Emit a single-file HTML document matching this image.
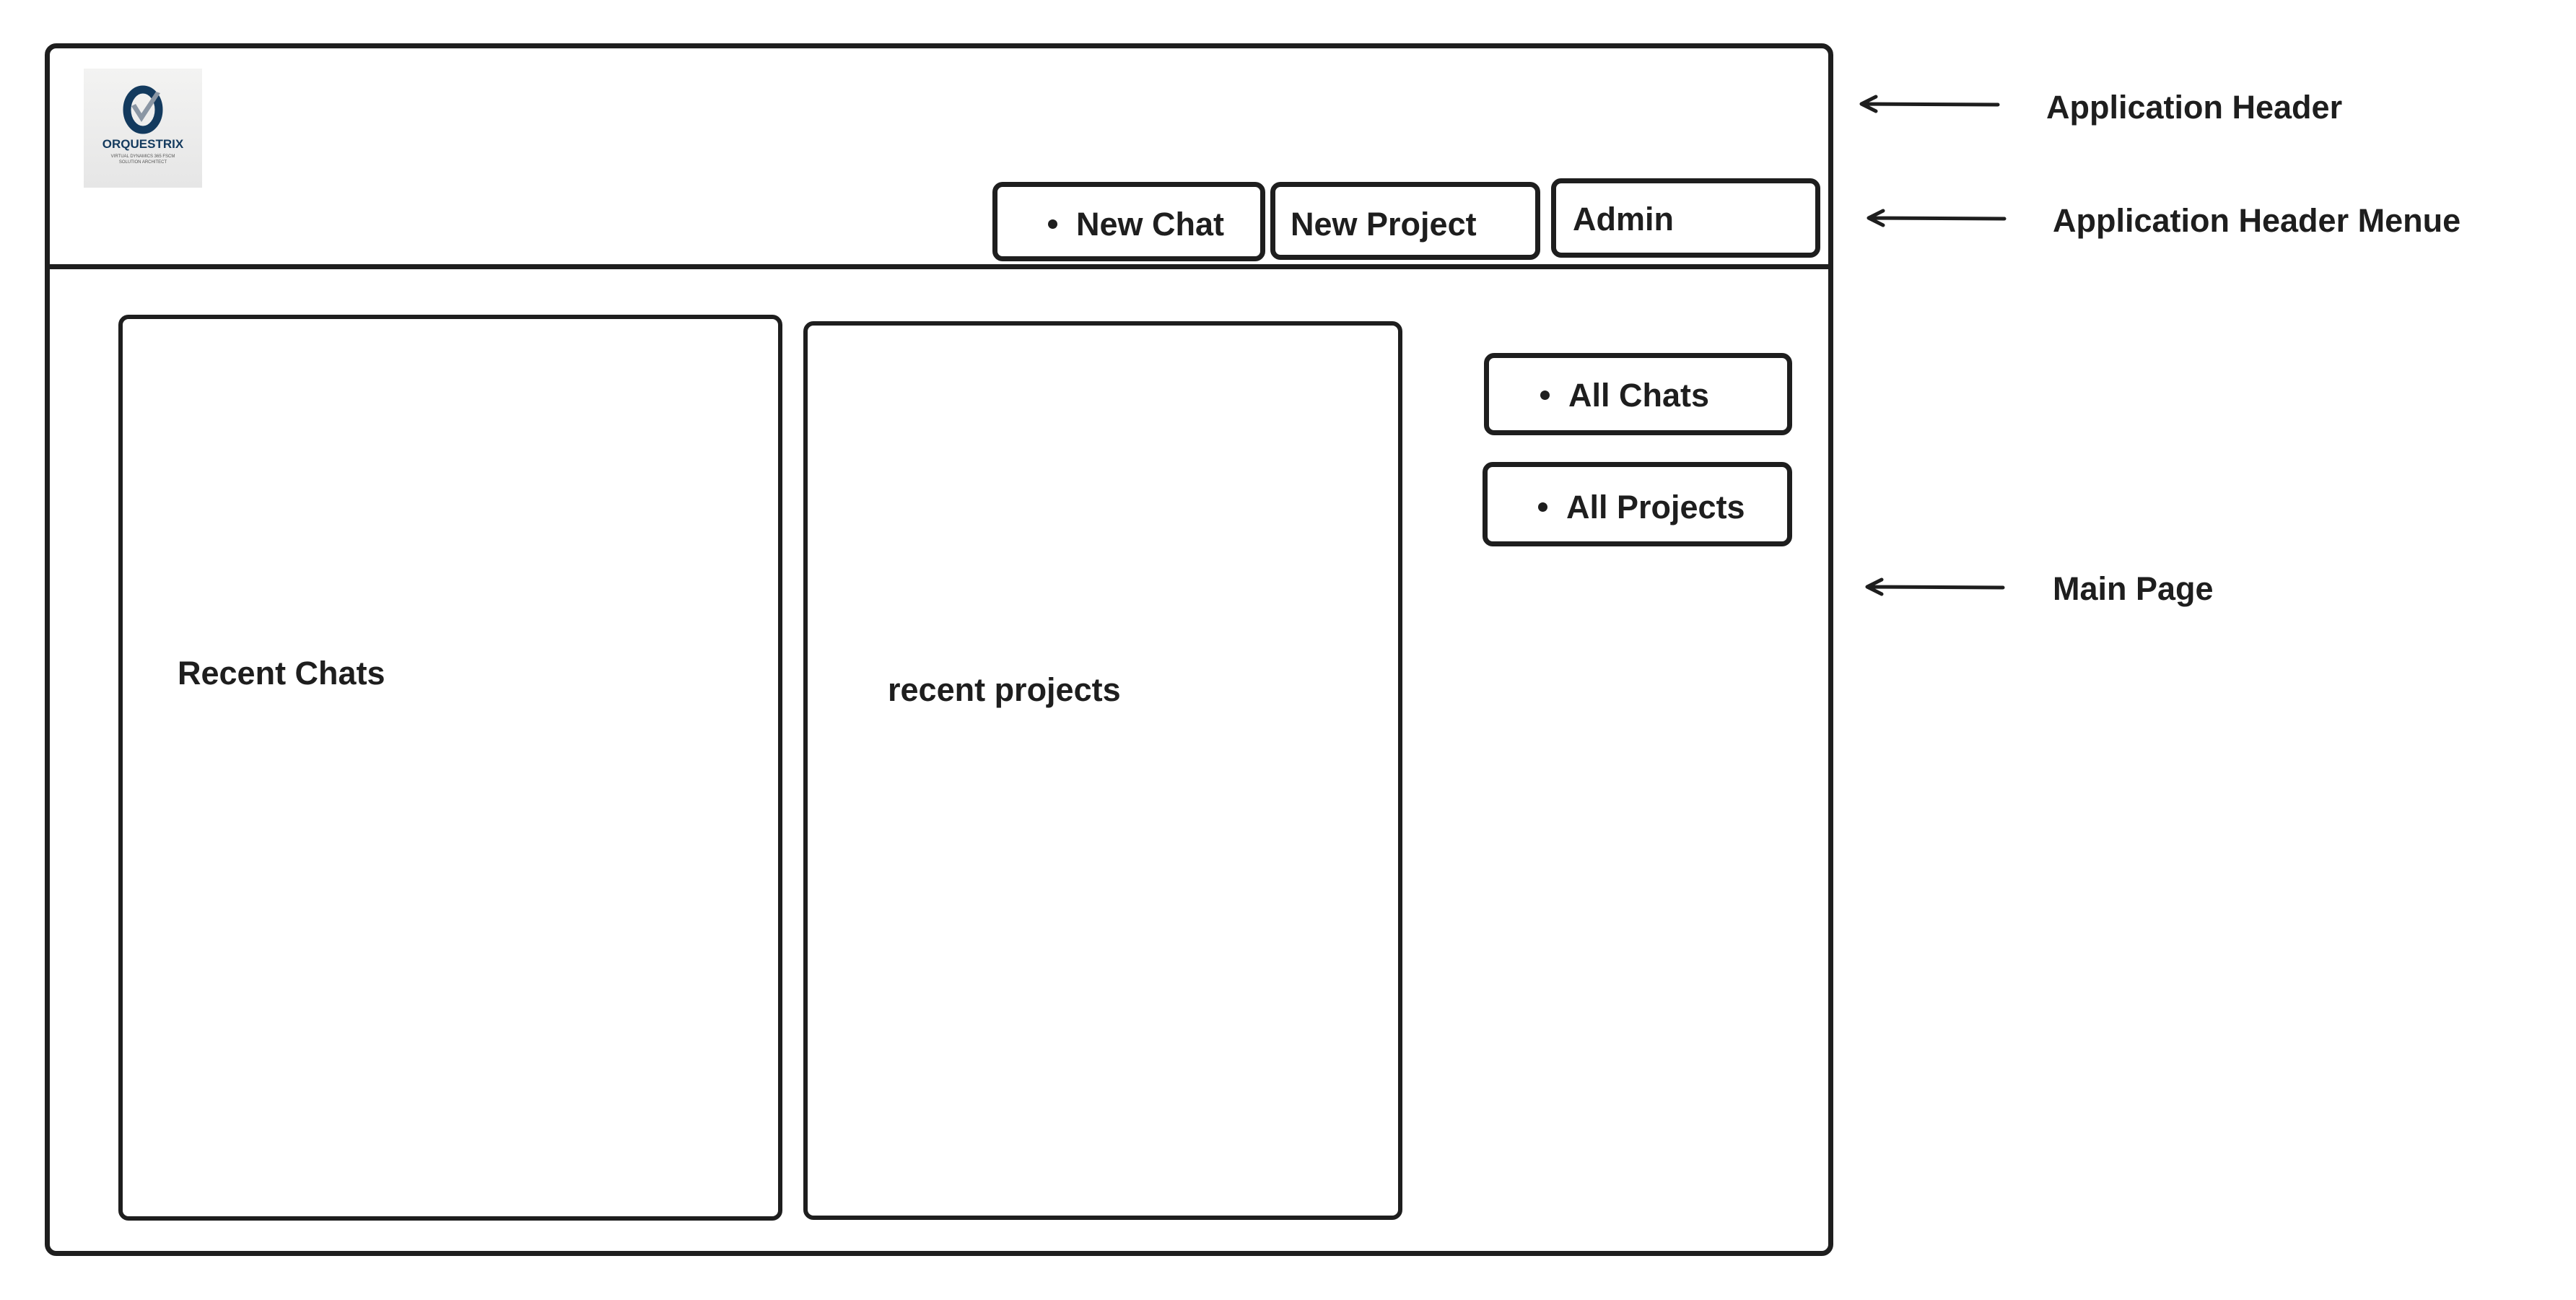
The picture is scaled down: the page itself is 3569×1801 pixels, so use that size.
<!DOCTYPE html>
<html><head><meta charset="utf-8"><style>
html,body{margin:0;padding:0;background:#fff;}
body{width:3569px;height:1801px;position:relative;overflow:hidden;font-family:"Liberation Sans",sans-serif;color:#1e1e1e;}
.b{position:absolute;border:7px solid #1e1e1e;border-radius:14px;box-sizing:border-box;background:transparent;}
.t{position:absolute;font-weight:bold;font-size:45px;white-space:nowrap;line-height:1;}
.dot{display:inline-block;width:13px;height:13px;border-radius:50%;background:#1e1e1e;vertical-align:middle;margin-right:26px;position:relative;top:-4px;}
</style></head><body>
<div class="b" style="left:62px;top:60px;width:2478px;height:1680px;border-radius:16px;"></div>
<div style="position:absolute;left:62px;top:366px;width:2478px;height:7px;background:#1e1e1e;"></div>

<div style="position:absolute;left:116px;top:95px;width:164px;height:165px;background:linear-gradient(#f3f3f2,#e6e6e6);">
<svg width="164" height="165" viewBox="0 0 164 165">
<ellipse cx="82" cy="57" rx="22" ry="28" fill="none" stroke="#133a5e" stroke-width="11"/>
<path d="M66 52 L80 74 L106 34 L100 32 L80 62 L72 49 Z" fill="#8a96a4"/>
<text x="82" y="110" font-family="Liberation Sans" font-weight="bold" font-size="17" fill="#133a5e" text-anchor="middle">ORQUESTRIX</text>
<text x="82" y="123" font-family="Liberation Sans" font-size="6" fill="#555" text-anchor="middle">VIRTUAL DYNAMICS 365 FSCM</text>
<text x="82" y="131" font-family="Liberation Sans" font-size="6" fill="#555" text-anchor="middle">SOLUTION ARCHITECT</text>
</svg></div>

<div class="b" style="left:1375px;top:252px;width:378px;height:110px;"></div>
<div class="t" style="left:1452px;top:288px;"><span class="dot"></span>New Chat</div>
<div class="b" style="left:1760px;top:252px;width:374px;height:108px;"></div>
<div class="t" style="left:1788px;top:288px;">New Project</div>
<div class="b" style="left:2149px;top:247px;width:373px;height:110px;"></div>
<div class="t" style="left:2179px;top:281px;">Admin</div>

<div class="b" style="left:164px;top:436px;width:920px;height:1255px;border-width:6px;"></div>
<div class="t" style="left:246px;top:910px;">Recent Chats</div>
<div class="b" style="left:1113px;top:445px;width:830px;height:1245px;border-width:6px;"></div>
<div class="t" style="left:1230px;top:933px;">recent projects</div>

<div class="b" style="left:2056px;top:489px;width:427px;height:114px;"></div>
<div class="t" style="left:2134px;top:525px;"><span class="dot"></span>All Chats</div>
<div class="b" style="left:2054px;top:640px;width:429px;height:117px;"></div>
<div class="t" style="left:2131px;top:680px;"><span class="dot"></span>All Projects</div>

<svg style="position:absolute;left:0;top:0" width="3569" height="1801">
<g stroke="#1e1e1e" stroke-width="5" fill="none" stroke-linecap="round">
<path d="M2768 145 L2579 144 M2579 144 L2599 134 M2579 144 L2599 154"/>
<path d="M2777 303 L2589 302 M2589 302 L2609 292 M2589 302 L2609 312"/>
<path d="M2775 814 L2587 813 M2587 813 L2607 803 M2587 813 L2607 823"/>
</g></svg>
<div class="t" style="left:2835px;top:126px;">Application Header</div>
<div class="t" style="left:2844px;top:283px;">Application Header Menue</div>
<div class="t" style="left:2844px;top:793px;">Main Page</div>
</body></html>
